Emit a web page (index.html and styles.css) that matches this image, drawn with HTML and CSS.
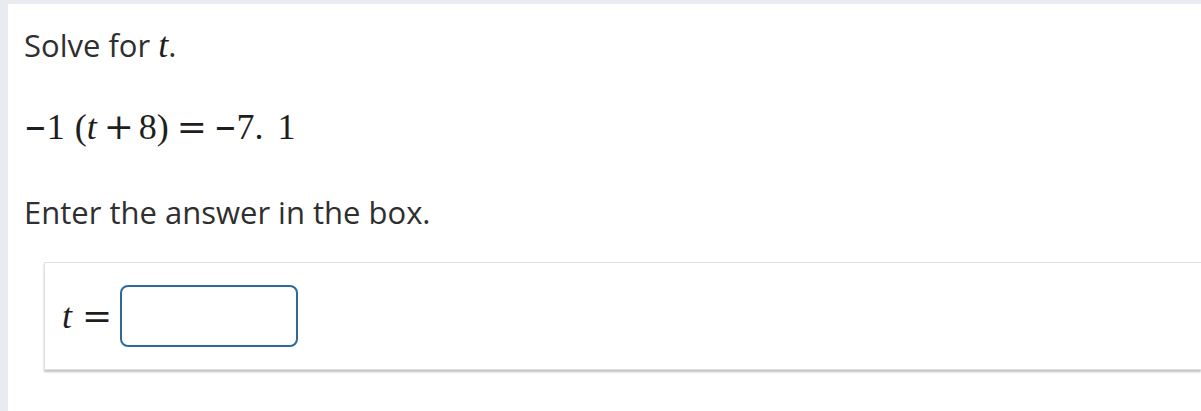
FILE: index.html
```html
<!DOCTYPE html>
<html>
<head>
<meta charset="utf-8">
<link rel="stylesheet" href="styles.css">
</head>
<body>
<main class="panel">
  <p class="prompt">Solve for <span class="mi">t</span>.</p>
  <p class="equation"><span class="neg">−</span>1<span class="sp"></span>(<span class="mi">t</span><span class="op bin">+</span>8)<span class="op rel">=</span><span class="neg">−</span>7.<span class="sp2"></span>1</p>
  <p class="instr">Enter the answer in the box.</p>
  <section class="card">
    <span class="mi lbl">t</span><span class="op eq">=</span>
    <input class="answer" type="text" aria-label="t">
  </section>
</main>
</body>
</html>
```

FILE: styles.css
```css
html, body {
  margin: 0;
  padding: 0;
  background: #e8ebef;
}
body {
  padding: 4px 0 0 8px;
  height: 411px;
  box-sizing: border-box;
  overflow: hidden;
}
.panel {
  background: #ffffff;
  height: 100%;
  padding: 20px 0 0 16px;
  box-sizing: border-box;
  font-family: "Open Sans", "Liberation Sans", sans-serif;
  color: #2f2f2f;
}
.prompt {
  margin: 0;
  font-size: 31px;
  line-height: 42px;
}
.mi {
  font-family: "Liberation Serif", "Times New Roman", serif;
  font-style: italic;
  font-size: 36px;
  color: #1e1e1e;
}
.equation {
  margin: 41px 0 0 0;
  font-family: "Liberation Serif", "DejaVu Serif", serif;
  font-size: 36px;
  line-height: 40px;
  height: 40px;
  color: #1e1e1e;
  white-space: nowrap;
}
.op {
  font-family: "DejaVu Serif", serif;
  font-size: 36px;
  line-height: 40px;
}
.bin { margin: 0 5px 0 7px; }
.rel { margin: 0 7px 0 8px; }
.neg {
  font-family: "DejaVu Serif", serif;
  font-size: 27px;
  font-weight: 700;
  position: relative;
  top: -2px;
}
.sp { display: inline-block; width: 10px; }
.sp2 { display: inline-block; width: 14px; }
.instr {
  margin: 44px 0 0 0;
  font-size: 31px;
  line-height: 42px;
}
.card {
  margin: 29px 0 0 20px;
  height: 108px;
  border: 1px solid #e2e2e2;
  border-right: none;
  box-shadow: 0 2px 2px rgba(0,0,0,0.25);
  display: flex;
  align-items: center;
  padding-left: 17px;
  box-sizing: border-box;
  color: #1e1e1e;
}
.lbl { font-size: 36px; }
.eq {
  margin: 0 8px 0 10px;
}
.answer {
  width: 178px;
  height: 62px;
  box-sizing: border-box;
  border: 2px solid #2b6a9a;
  border-radius: 8px;
  background: #ffffff;
  margin: 0;
}
```
